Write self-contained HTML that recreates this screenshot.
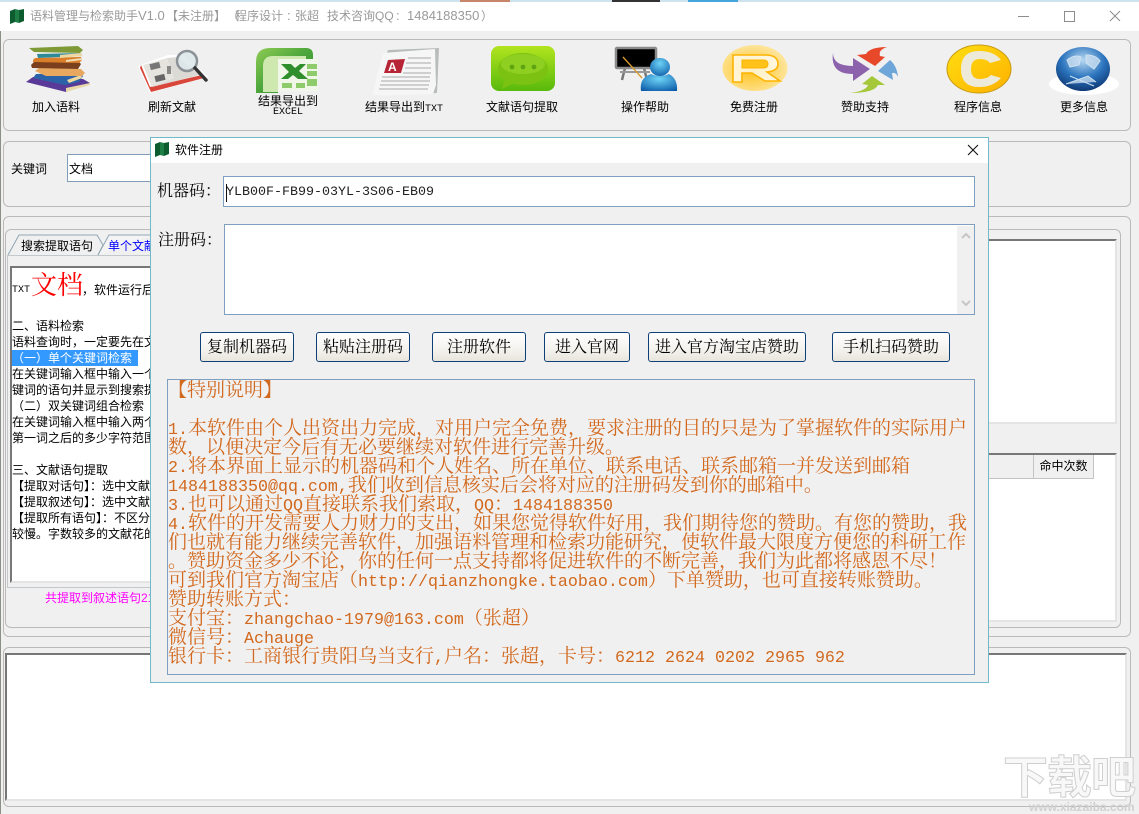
<!DOCTYPE html>
<html lang="zh"><head><meta charset="utf-8"><title>语料管理与检索助手</title>
<style>
html,body{margin:0;padding:0;width:1139px;height:814px;overflow:hidden;background:#f0f0f0}
body{position:relative;font-family:"Liberation Sans","WenQuanYi Zen Hei","Noto Sans CJK SC",sans-serif;font-size:12px;color:#000}
div,span{box-sizing:border-box}
.a{position:absolute}
.t{position:absolute;white-space:pre;line-height:16px}
.p{position:absolute;border:1px solid #bdb9b9;border-radius:6px}
.w{position:absolute;background:#fff;border-top:2px solid #777;border-left:1px solid #ddd;border-right:2px solid #e4e4e4;border-bottom:2px solid #e4e4e4}
.lb{position:absolute;text-align:center;white-space:pre;line-height:14px;top:100px}
.lb i{font-style:normal;font-family:"Liberation Mono",monospace;font-size:10px}
.btn{position:absolute;top:332px;height:30px;border:1px solid #0f3f78;border-radius:3px;background:linear-gradient(#fff,#f4f3ef 55%,#e8e6dd);text-align:center;font-size:16px;line-height:30px;white-space:pre;font-family:"Liberation Sans","Noto Serif CJK SC",serif}
.note{position:absolute;left:168px;top:381px;width:806px;font-size:19px;line-height:19px;color:#d2691e;font-family:"Liberation Serif","Noto Serif CJK SC",serif}
.note div{height:19px;white-space:pre;overflow:visible}
.note b{font-weight:normal;font-family:"Liberation Mono",monospace;font-size:16.67px;line-height:0}
.ti{position:absolute;top:8px;white-space:pre;line-height:16px;color:#9a9a9a}
</style></head><body>
<div class="a" style="left:0;top:0;width:1139px;height:2px;background:#cfe3ee"></div>
<div class="a" style="left:460px;top:0;width:50px;height:2px;background:#c9856a"></div>
<div class="a" style="left:612px;top:0;width:48px;height:2px;background:#333"></div>
<div class="a" style="left:688px;top:0;width:50px;height:2px;background:#45a5dd"></div>
<div class="a" style="left:0;top:2px;width:1139px;height:29px;background:#fff"></div>
<div class="a" style="left:0;top:31px;width:1px;height:783px;background:#8a8f88"></div>

<svg class="a" style="left:9px;top:8px" width="17" height="17" viewBox="0 0 17 17"><path d="M1 3l5-2v13l-5 2z" fill="#0c5c30"/><path d="M6 1l4 1v13l-4-1z" fill="#1f7d46"/><path d="M10 2l5-1v12l-5 2z" fill="#0c5c30"/></svg>
<div class="ti" style="left:30px">语料管理与检索助手</div>
<div class="ti" style="left:138px;font-size:13px">V1.0</div>
<div class="ti" style="left:166px">【未注册】</div>
<div class="ti" style="left:227px">（</div>
<div class="ti" style="left:235px">程序设计</div>
<div class="ti" style="left:287px;font-size:13px">:</div>
<div class="ti" style="left:295px">张超</div>
<div class="ti" style="left:327px">技术咨询QQ</div>
<div class="ti" style="left:396px;font-size:13px">:</div>
<div class="ti" style="left:407px;font-size:13px">1484188350</div>
<div class="ti" style="left:481px">）</div>
<svg class="a" style="left:1015px;top:8px" width="110" height="16" viewBox="0 0 110 16" fill="none" stroke="#8c8c8c"><path d="M3 8.5h11"/><rect x="49.5" y="3.5" width="10" height="10"/><path d="M95 3l10 10M105 3l-10 10"/></svg>

<!-- Toolbar panel -->
<div class="p" style="left:3px;top:39px;width:1128px;height:92px"></div>
<svg class="a" style="left:0;top:0" width="1139" height="100" viewBox="0 0 1139 100">
<defs>
<linearGradient id="gx" x1="0" y1="0" x2="1" y2="1"><stop offset="0" stop-color="#8ecb54"/><stop offset=".5" stop-color="#4aa53a"/><stop offset="1" stop-color="#2c8a2a"/></linearGradient>
<linearGradient id="gc" x1="0" y1="0" x2="0" y2="1"><stop offset="0" stop-color="#b2e41f"/><stop offset="1" stop-color="#58b90c"/></linearGradient>
<radialGradient id="gr" cx=".45" cy=".55" r=".6"><stop offset="0" stop-color="#ffc21a"/><stop offset="1" stop-color="#fee8a8"/></radialGradient>
<linearGradient id="gy" x1="0" y1="0" x2="1" y2="1"><stop offset="0" stop-color="#ffdf10"/><stop offset="1" stop-color="#fdb000"/></linearGradient>
<radialGradient id="gg" cx=".5" cy=".3" r=".8"><stop offset="0" stop-color="#b6d8f2"/><stop offset=".5" stop-color="#2a73bd"/><stop offset="1" stop-color="#06265c"/></radialGradient>
<radialGradient id="gb" cx=".5" cy=".3" r=".8"><stop offset="0" stop-color="#6ed3f6"/><stop offset="1" stop-color="#0a5aa8"/></radialGradient>
</defs>
<!-- books -->
<path d="M26 82l7-5 50 2 7 4-24 9z" fill="#5a3a98"/>
<path d="M66 88l24-5v2l-24 7z" fill="#e8d7a8"/>
<path d="M33 78l3-4 44-1 3 3-4 6-14 3z" fill="#2c62a8"/>
<path d="M67 80l14-5 1 3-13 5z" fill="#efd7a0"/>
<path d="M35 71l4-3 42 1 4 4-3 3-36 0z" fill="#e8a860"/>
<path d="M31 65l3-3 44-1 3 3-3 5-46-1z" fill="#7a3f1c"/>
<path d="M33 60l2-2 46-1 1 3-3 3-46-1z" fill="#d97f2a"/>
<path d="M66 60l16-2v2l-16 2z" fill="#f0deb5"/>
<path d="M37 54l44-1 1 3-44 2z" fill="#2f8a98"/>
<path d="M60 55l21-2 1 3-22 2z" fill="#efd7a0"/>
<path d="M29 48l49-2 5 4-3 3-46-1z" fill="#7d9a36"/>
<!-- open book -->
<path d="M138 66l30-11 16 0 24 22-58 16z" fill="#fff"/>
<path d="M141 65l9 22 52-12 2 3-53 14-11-24z" fill="#d9463a"/>
<path d="M143 65l24-7 7 20-22 9z" fill="#e6e4de"/><path d="M167 58l10-1 23 18-48 12 22-9z" fill="#dcdad4"/>
<rect x="150" y="63" width="10" height="6" fill="#777" transform="rotate(-14 155 66)"/><rect x="155" y="75" width="10" height="6" fill="#666" transform="rotate(-14 160 78)"/><rect x="167" y="66" width="4" height="8" fill="#888"/>
<circle cx="187" cy="61" r="10" fill="#dce6ea" fill-opacity=".85" stroke="#8a9298" stroke-width="2.5"/>
<path d="M195 68l11 12" stroke="#333" stroke-width="3.5" stroke-linecap="round"/>
<!-- excel -->
<path d="M256 62q0-14 14-14h36q7 0 7 7v6h-35v32h-22z" fill="url(#gx)"/>
<path d="M263 92V66q0-10 10-10h33v5h-28v31z" fill="#cfe8b0"/>
<path d="M278 59h40v32h-40z" fill="#f1f7e8"/>
<path d="M281 64h10l4 4 5-4h6l-7 7 9 8h-10l-5-4-5 4h-7l8-7z" fill="#2f8f2c"/>
<rect x="307" y="64" width="10" height="5" fill="#8ecb6a"/><rect x="307" y="71" width="10" height="5" fill="#8ecb6a"/><rect x="307" y="79" width="10" height="7" fill="#8ecb6a"/>
<rect x="282" y="83" width="10" height="5" fill="#8ecb6a"/><rect x="296" y="83" width="9" height="5" fill="#8ecb6a"/>
<!-- doc A -->
<path d="M388 50l51-2-2 45-65 3z" fill="#b9bcbc"/>
<path d="M383 53l52-4 1 36-3 9-61 2z" fill="#f6f6f6"/>
<path d="M388 60l17-1-4 14-17 0z" fill="#b62436"/>
<text x="388" y="71" font-family="Liberation Sans" font-weight="bold" font-size="12" fill="#fff">A</text>
<path d="M408 58h23M406 63h25M405 68h26M403 73h28M382 77h48M381 81h49M380 85h49M379 89h49" stroke="#c2c2c2" stroke-width="1.4" fill="none"/>
<!-- chat -->
<rect x="491" y="46" width="64" height="45" rx="8" fill="url(#gc)"/>
<ellipse cx="523" cy="69" rx="25" ry="16" fill="#7cc212"/>
<path d="M505 78l-3 11 14-7z" fill="#7cc212"/>
<ellipse cx="523" cy="64" rx="22" ry="10" fill="#8fcf22"/>
<circle cx="512" cy="67" r="2.4" fill="#5fa312"/><circle cx="523" cy="67" r="2.4" fill="#5fa312"/><circle cx="534" cy="67" r="2.4" fill="#5fa312"/>
<!-- teacher -->
<path d="M625 68l-3 12M644 68l3 12" stroke="#777" stroke-width="2.5" fill="none"/>
<path d="M620 72h30" stroke="#999" stroke-width="2"/>
<rect x="616" y="48" width="40" height="20" rx="1" fill="#000" stroke="#8a8a8a" stroke-width="2.5"/>
<path d="M623 57l19 21" stroke="#d99a2e" stroke-width="1.4"/>
<path d="M641 91q-2-13 10-17q9 4 18 0q9 5 8 17z" fill="url(#gb)"/>
<ellipse cx="660" cy="67" rx="10" ry="9" fill="url(#gb)"/>
<!-- R -->
<ellipse cx="755" cy="68" rx="32.5" ry="23" fill="url(#gr)"/>
<path d="M733 55H765Q778 55 778 64Q778 71 767 72L780 81H765L752 73H742V82H733Z" fill="#fff" fill-opacity=".75" stroke="#fdb400" stroke-width="1.6"/>
<path d="M742 60H763Q768 60 768 64Q768 68 763 68H742Z" fill="#ffc21a" stroke="#fdb400"/>
<!-- arrows -->
<path d="M833 53Q833 66 853 66V58L870 69L853 81V74Q830 74 833 53Z" fill="#8d62ad"/>
<path d="M857 55L866 54Q870 47 887 47Q878 50 880 56L885 57L875 66Z" fill="#e8482a"/>
<path d="M878 71L890 60Q897 66 898 77Q896 72 892 73L893 80Z" fill="#6ea6da"/>
<path d="M872 76L885 85H878Q874 93 850 93Q866 91 868 85L862 84Z" fill="#a4c83a"/>
<!-- C -->
<ellipse cx="979" cy="69" rx="32" ry="24" fill="url(#gy)" stroke="#c79a14"/>
<path d="M1001 60q-7-9-22-9q-18 0-18 18t18 18q14 0 22-9l-10-3q-4 4-11 4q-9 0-9-10t9-10q7 0 10 4z" fill="#eeeada"/>
<!-- globe -->
<ellipse cx="1084" cy="84" rx="35" ry="11" fill="#fff"/>
<ellipse cx="1083" cy="69" rx="27" ry="22" fill="url(#gg)"/>
<path d="M1067 60q8-6 14-3l-2 8-9 2zM1086 55q10 0 14 6l-6 8-8-6zM1066 84l22-8 8 6M1070 76l24 10" fill="#cfe2f2" stroke="#cfe2f2" fill-opacity=".75"/>
</svg>
<div class="lb" style="left:16px;width:80px">加入语料</div>
<div class="lb" style="left:132px;width:80px">刷新文献</div>
<div class="lb" style="left:248px;width:80px;top:94px">结果导出到</div>
<div class="lb" style="left:248px;width:80px;top:107px;font-family:'Liberation Mono',monospace;font-size:10px;top:106px">EXCEL</div>
<div class="lb" style="left:344px;width:120px">结果导出到<i>TXT</i></div>
<div class="lb" style="left:462px;width:120px">文献语句提取</div>
<div class="lb" style="left:605px;width:80px">操作帮助</div>
<div class="lb" style="left:714px;width:80px">免费注册</div>
<div class="lb" style="left:825px;width:80px">赞助支持</div>
<div class="lb" style="left:938px;width:80px">程序信息</div>
<div class="lb" style="left:1044px;width:80px">更多信息</div>

<!-- Keyword panel -->
<div class="p" style="left:3px;top:141px;width:1128px;height:66px"></div>
<div class="t" style="left:11px;top:161px">关键词</div>
<div class="a" style="left:67px;top:154px;width:90px;height:28px;background:#fff;border:1px solid #7f9db9"></div>
<div class="t" style="left:69px;top:161px">文档</div>

<!-- Main panel -->
<div class="p" style="left:3px;top:216px;width:1128px;height:421px"></div>
<div class="p" style="left:5px;top:229px;width:1116px;height:399px"></div>
<div class="a" style="left:7px;top:255px;width:143px;height:333px;border:1px solid #c2c8cc;border-right:0"></div>
<svg class="a" style="left:7px;top:234px" width="145" height="22" viewBox="0 0 145 22"><path d="M1 21L12 1h78l6 10-5 10" fill="#f0f0f0" stroke="#8fa6b4"/><path d="M91 21L102 1h43" fill="#f4f4f4" stroke="#8fa6b4"/></svg>
<div class="t" style="left:21px;top:238px">搜索提取语句</div>
<div class="t" style="left:108px;top:238px;color:#00f;width:42px;overflow:hidden">单个文献</div>
<div class="w" style="left:10px;top:266px;width:150px;height:317px;border-left:2px solid #777;border-right:0"></div>
<div class="a" style="left:12px;top:268px;width:138px;height:310px;overflow:hidden">
<div class="t" style="left:0;top:15px;font-size:10px;font-family:'Liberation Mono',monospace">TXT</div>
<div class="t" style="left:19px;top:1px;font-size:26px;line-height:32px;color:#f00;font-family:'Liberation Sans','Noto Serif CJK SC',serif">文档</div>
<div class="t" style="left:70px;top:14px">，软件运行后</div>
<div class="t" style="left:0;top:50px">二、语料检索</div>
<div class="t" style="left:0;top:66px">语料查询时，一定要先在文</div>
<div class="t" style="left:0;top:82px;width:126px;background:#3399ff;color:#fff">（一）单个关键词检索</div>
<div class="t" style="left:0;top:98px">在关键词输入框中输入一个</div>
<div class="t" style="left:0;top:114px">键词的语句并显示到搜索提</div>
<div class="t" style="left:0;top:130px">（二）双关键词组合检索</div>
<div class="t" style="left:0;top:146px">在关键词输入框中输入两个</div>
<div class="t" style="left:0;top:162px">第一词之后的多少字符范围</div>
<div class="t" style="left:0;top:194px">三、文献语句提取</div>
<div class="t" style="left:0;top:210px">【提取对话句】：选中文献</div>
<div class="t" style="left:0;top:226px">【提取叙述句】：选中文献</div>
<div class="t" style="left:0;top:242px">【提取所有语句】：不区分</div>
<div class="t" style="left:0;top:258px">较慢。字数较多的文献花的</div>
</div>
<div class="t" style="left:45px;top:590px;color:#f0f;width:105px;overflow:hidden">共提取到叙述语句21</div>

<div class="w" style="left:985px;top:239px;width:132px;height:185px;border-left:0"></div>
<div class="w" style="left:985px;top:453px;width:132px;height:169px;border-left:0"></div>
<div class="a" style="left:985px;top:455px;width:49px;height:24px;background:#f0f0f0;border-bottom:1px solid #c4c4c4"></div>
<div class="a" style="left:1033px;top:455px;width:61px;height:24px;background:#f0f0f0;border:1px solid #c4c4c4;border-top:0;text-align:center;line-height:23px">命中次数</div>

<!-- Bottom panel -->
<div class="p" style="left:3px;top:647px;width:1128px;height:160px"></div>
<div class="w" style="left:5px;top:653px;width:1122px;height:148px;border-left:2px solid #777"></div>

<!-- Watermark -->
<div class="a" style="left:1003px;top:753px;font-size:45px;line-height:50px;white-space:pre;letter-spacing:-1px;color:#f8f8f8;-webkit-text-stroke:1px #cfcfcf;font-family:'Liberation Sans','Noto Sans CJK SC',sans-serif;font-weight:bold">下载吧</div>
<div class="a" style="left:1029px;top:801px;font-size:12px;line-height:13px;white-space:pre;color:#d0d0d0;font-family:'Liberation Sans',sans-serif;font-weight:bold">www.xiazaiba.com</div>

<!-- Dialog -->
<div class="a" style="left:150px;top:137px;width:839px;height:546px;background:#f0f0f0;border:1px solid #6fb9c9"></div>
<div class="a" style="left:151px;top:138px;width:837px;height:25px;background:#fff"></div>
<svg class="a" style="left:154px;top:141px" width="17" height="17" viewBox="0 0 17 17"><path d="M1 3l5-2v13l-5 2z" fill="#0c5c30"/><path d="M6 1l4 1v13l-4-1z" fill="#1f7d46"/><path d="M10 2l5-1v12l-5 2z" fill="#0c5c30"/></svg>
<div class="t" style="left:175px;top:142px">软件注册</div>
<svg class="a" style="left:966px;top:143px" width="14" height="14" viewBox="0 0 14 14" fill="none" stroke="#111" stroke-width="1.1"><path d="M2 2l10 10M12 2L2 12"/></svg>

<div class="t" style="left:157px;top:183px;font-size:16px;line-height:18px;font-family:'Liberation Sans','Noto Serif CJK SC',serif">机器码：</div>
<div class="a" style="left:223px;top:176px;width:752px;height:31px;background:#fff;border:1px solid #7f9fc0"></div>
<div class="t" style="left:226px;top:184px;font-size:13.33px;line-height:18px;font-family:'Liberation Mono',monospace;color:#222">YLB00F-FB99-03YL-3S06-EB09</div>
<div class="a" style="left:226px;top:184px;width:1px;height:18px;background:#111"></div>

<div class="t" style="left:158px;top:232px;font-size:16px;line-height:18px;font-family:'Liberation Sans','Noto Serif CJK SC',serif">注册码：</div>
<div class="a" style="left:224px;top:224px;width:751px;height:91px;background:#fff;border:1px solid #7f9fc0"></div>
<div class="a" style="left:957px;top:226px;width:17px;height:88px;background:#f0f0f0"></div>
<svg class="a" style="left:957px;top:226px" width="17" height="88" viewBox="0 0 17 88" fill="none" stroke="#c6c6c6" stroke-width="2"><path d="M5 12l4-4 4 4M5 75l4 4 4-4"/></svg>

<div class="btn" style="left:200px;width:94px">复制机器码</div>
<div class="btn" style="left:316px;width:94px">粘贴注册码</div>
<div class="btn" style="left:432px;width:94px">注册软件</div>
<div class="btn" style="left:544px;width:86px">进入官网</div>
<div class="btn" style="left:648px;width:158px">进入官方淘宝店赞助</div>
<div class="btn" style="left:832px;width:118px">手机扫码赞助</div>

<div class="a" style="left:167px;top:379px;width:808px;height:296px;background:#f0f0f0;border:1px solid #7f9fc0"></div>
<div class="note">
<div>【特别说明】</div>
<div> </div>
<div><b>1.</b>本软件由个人出资出力完成，对用户完全免费，要求注册的目的只是为了掌握软件的实际用户</div>
<div>数，以便决定今后有无必要继续对软件进行完善升级。</div>
<div><b>2.</b>将本界面上显示的机器码和个人姓名、所在单位、联系电话、联系邮箱一并发送到邮箱</div>
<div><b>1484188350@qq.com,</b>我们收到信息核实后会将对应的注册码发到你的邮箱中。</div>
<div><b>3.</b>也可以通过<b>QQ</b>直接联系我们索取，<b>QQ</b>：<b>1484188350</b></div>
<div><b>4.</b>软件的开发需要人力财力的支出，如果您觉得软件好用，我们期待您的赞助。有您的赞助，我</div>
<div>们也就有能力继续完善软件，加强语料管理和检索功能研究，使软件最大限度方便您的科研工作</div>
<div>。赞助资金多少不论，你的任何一点支持都将促进软件的不断完善，我们为此都将感恩不尽！</div>
<div>可到我们官方淘宝店（<b>http://qianzhongke.taobao.com</b>）下单赞助，也可直接转账赞助。</div>
<div>赞助转账方式：</div>
<div>支付宝：<b>zhangchao-1979@163.com</b>（张超）</div>
<div>微信号：<b>Achauge</b></div>
<div>银行卡：工商银行贵阳乌当支行<b>,</b>户名：张超，卡号：<b>6212 2624 0202 2965 962</b></div>
</div>
</body></html>
